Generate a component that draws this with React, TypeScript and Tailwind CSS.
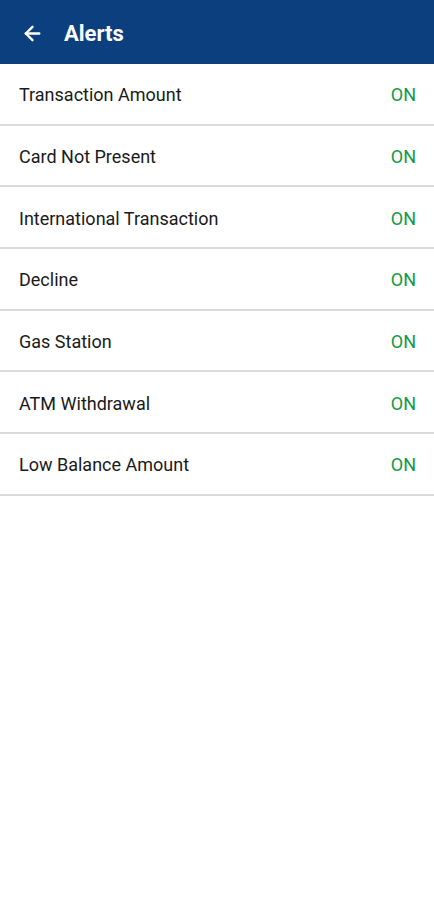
import { ArrowLeft } from 'lucide-react';

const alerts = [
  'Transaction Amount',
  'Card Not Present',
  'International Transaction',
  'Decline',
  'Gas Station',
  'ATM Withdrawal',
  'Low Balance Amount',
];

export default function App() {
  return (
    <div className="min-h-[900px] w-[434px] bg-white font-['Roboto',sans-serif]">
      {/* Top bar */}
      <div className="flex h-[64px] items-center bg-[#0b3f7d] pl-[21px] pt-[2px] text-white">
        <ArrowLeft className="h-[23px] w-[23px]" strokeWidth={2.5} />
        <span className="ml-[20px] text-[22px] font-bold">Alerts</span>
      </div>

      {/* Alert rows */}
      <div>
        {alerts.map((label) => (
          <div
            key={label}
            className="flex h-[61.7px] items-center justify-between border-b-2 border-[#dadada] pl-[19px] pr-[18px] pt-[2px]"
          >
            <span className="text-[18px] text-[#1a1a1a]">{label}</span>
            <span className="text-[18px] text-[#109a45]">ON</span>
          </div>
        ))}
      </div>
    </div>
  );
}
